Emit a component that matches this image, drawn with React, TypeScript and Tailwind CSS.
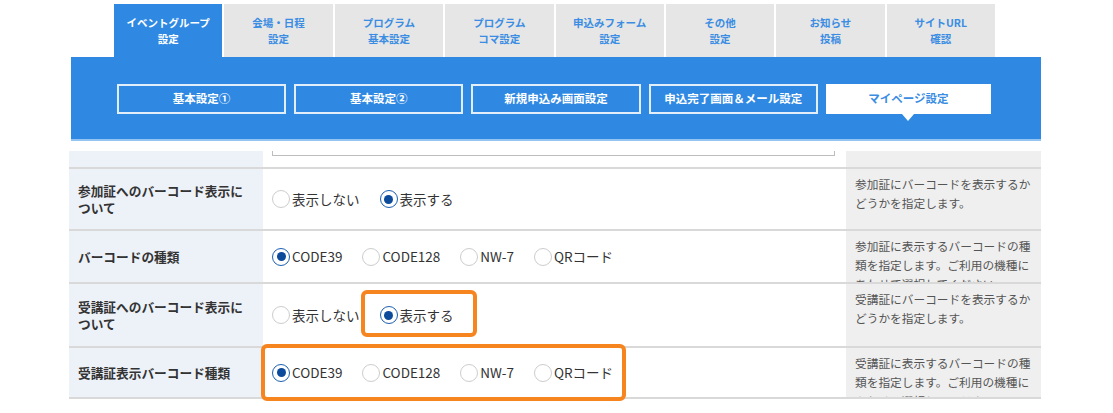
const tabs = [
  ['イベントグループ', '設定'],
  ['会場・日程', '設定'],
  ['プログラム', '基本設定'],
  ['プログラム', 'コマ設定'],
  ['申込みフォーム', '設定'],
  ['その他', '設定'],
  ['お知らせ', '投稿'],
  ['サイトURL', '確認'],
]

const subTabs = ['基本設定①', '基本設定②', '新規申込み画面設定', '申込完了画面＆メール設定', 'マイページ設定']

const showOptions = ['表示しない', '表示する']
const codeOptions = ['CODE39', 'CODE128', 'NW-7', 'QRコード']

interface Row {
  label: string
  options: string[]
  checked: number
  desc: string
  height: string
}

const rows: Row[] = [
  {
    label: '参加証へのバーコード表示について',
    options: showOptions,
    checked: 1,
    desc: '参加証にバーコードを表示するかどうかを指定します。',
    height: 'h-[62px]',
  },
  {
    label: 'バーコードの種類',
    options: codeOptions,
    checked: 0,
    desc: '参加証に表示するバーコードの種類を指定します。ご利用の機種にあわせて選択してください。',
    height: 'h-[53px]',
  },
  {
    label: '受講証へのバーコード表示について',
    options: showOptions,
    checked: 1,
    desc: '受講証にバーコードを表示するかどうかを指定します。',
    height: 'h-[64px]',
  },
  {
    label: '受講証表示バーコード種類',
    options: codeOptions,
    checked: 0,
    desc: '受講証に表示するバーコードの種類を指定します。ご利用の機種にあわせて選択してください。',
    height: 'h-[51px]',
  },
]

const Radio: React.FC<{ checked: boolean; label: string }> = ({ checked, label }) => (
  <label className="flex items-center gap-[2px]">
    <span
      className={`flex h-[18px] w-[18px] items-center justify-center rounded-full bg-white ${
        checked ? 'border-[1.5px] border-[#1b5fb0]' : 'border border-[#cdcdcd]'
      }`}
    >
      {checked && <span className="h-[9px] w-[9px] rounded-full bg-[#0c4a9c]" />}
    </span>
    <span>{label}</span>
  </label>
)

export default function App() {
  return (
    <div className="relative h-[413px] w-[1113px] overflow-hidden bg-white pt-[4px] font-['Noto_Sans_CJK_JP','Noto_Sans',sans-serif] text-[#333]">
      {/* top tabs */}
      <div className="ml-[114px] flex h-[53px] w-[881px] gap-[2px]">
        {tabs.map((t, i) => (
          <div
            key={i}
            className={`flex flex-1 flex-col items-center justify-center text-[10.5px] font-bold leading-[16px] ${
              i === 0 ? 'bg-[#2f89e3] text-white' : 'bg-[#e6e6e6] text-[#3a8de2]'
            }`}
          >
            <span>{t[0]}</span>
            <span>{t[1]}</span>
          </div>
        ))}
      </div>

      {/* blue band */}
      <div className="ml-[71px] h-[84px] w-[970px] border-b-2 border-[#93c4f2] bg-[#2f89e3] pt-[27px]">
        <div className="ml-[46px] flex h-[30px] w-[874px] gap-[8px]">
          {subTabs.map((s, i) => {
            const active = i === subTabs.length - 1
            return (
              <div
                key={s}
                className={`relative flex flex-1 items-center justify-center text-[11.5px] font-bold ${
                  active ? 'bg-white text-[#3a8de2]' : 'border-2 border-[#e3eefb] text-white'
                }`}
              >
                {s}
                {active && (
                  <span className="absolute left-1/2 top-full -translate-x-1/2 border-l-[6px] border-r-[6px] border-t-[7px] border-l-transparent border-r-transparent border-t-white" />
                )}
              </div>
            )
          })}
        </div>
      </div>

      {/* table */}
      <div className="ml-[69px] mt-[10px] w-[972px]">
        <div className="grid h-[18px] grid-cols-[194px_583px_195px] border-b-2 border-[#d9d9d9]">
          <div className="bg-[#edf1f8]" />
          <div className="pl-[9px] pr-[11px]">
            <div className="h-[5px] border-x border-b border-[#bdbdbd]" />
          </div>
          <div className="bg-[#efefef]" />
        </div>
        {rows.map((r) => (
          <div key={r.label} className={`grid grid-cols-[194px_583px_195px] border-b-2 border-[#d9d9d9] ${r.height}`}>
            <div className="flex items-center bg-[#edf1f8] pl-[9px] pr-[14px] text-[12.7px] font-bold leading-[17px]">
              {r.label}
            </div>
            <div className="flex items-center gap-[20px] pl-[9px] text-[13.5px]">
              {r.options.map((o, i) => (
                <Radio key={o} label={o} checked={i === r.checked} />
              ))}
            </div>
            <div className="overflow-hidden bg-[#efefef] pl-[9px] pr-[8px] pt-[5px] text-[11.7px] leading-[19px] text-[#555]">
              {r.desc}
            </div>
          </div>
        ))}
      </div>

      {/* highlight boxes */}
      <div className="absolute left-[361px] top-[290px] h-[47px] w-[116px] rounded-[6px] border-4 border-[#f7851f]" />
      <div className="absolute left-[261px] top-[344px] h-[57px] w-[365px] rounded-[6px] border-4 border-[#f7851f]" />
    </div>
  )
}
